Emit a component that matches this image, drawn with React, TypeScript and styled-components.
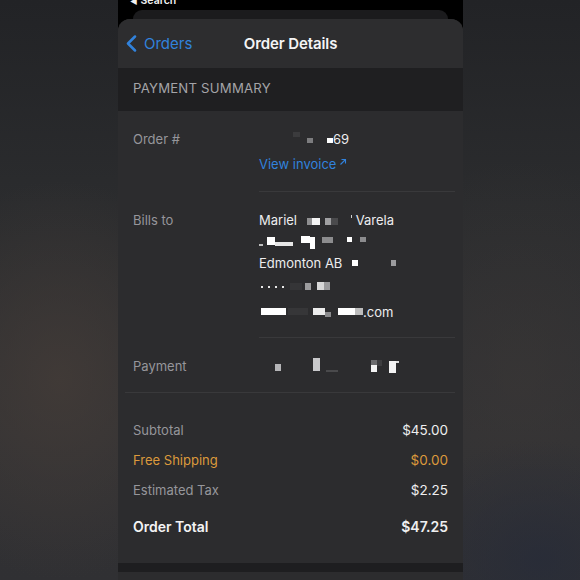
import React from "react";
import styled, { createGlobalStyle } from "styled-components";

const Global = createGlobalStyle`
  html, body { margin: 0; padding: 0; }
  body {
    width: 580px;
    height: 580px;
    overflow: hidden;
    font-family: Inter, "Liberation Sans", Arial, sans-serif;
    -webkit-font-smoothing: antialiased;
  }
`;

const Page = styled.div`
  width: 580px;
  height: 580px;
  overflow: hidden;
  background:
    radial-gradient(ellipse 160px 200px at 60px 380px, rgba(68, 60, 56, 0.8), transparent 100%),
    radial-gradient(ellipse 150px 120px at 540px 560px, rgba(40, 44, 56, 0.9), transparent 100%),
    radial-gradient(ellipse 160px 220px at 520px 380px, rgba(60, 56, 55, 0.55), transparent 100%),
    linear-gradient(180deg, #222326 0%, #2b2c2e 35%, #323234 75%, #303033 100%);
  display: flex;
`;

const Phone = styled.div`
  margin-left: 118px;
  width: 345px;
  height: 580px;
  background: #000;
  display: flex;
  flex-direction: column;
`;

const TopStrip = styled.div`
  height: 19px;
  display: flex;
  flex-direction: column;
  overflow: hidden;
`;

const BackHint = styled.div`
  margin-top: -4px;
  height: 10px;
  padding-left: 12px;
  display: flex;
  align-items: center;
  gap: 3px;
  font-size: 10.5px;
  font-weight: 600;
  color: #f2f2f2;
  line-height: 10px;
`;

const StackCard = styled.div`
  margin: 4px 15px 0;
  flex: 1;
  background: #1b1b1d;
  border-radius: 10px 10px 0 0;
`;

const Sheet = styled.div`
  flex: 1;
  background: #2c2c2e;
  border-radius: 12px 12px 0 0;
  display: flex;
  flex-direction: column;
`;

const NavBar = styled.div`
  height: 49px;
  display: grid;
  grid-template-columns: 1fr auto 1fr;
  align-items: center;
  padding: 0 8px;
  background: #2d2d2f;
  border-radius: 12px 12px 0 0;
`;

const BackButton = styled.div`
  display: flex;
  align-items: center;
  gap: 7px;
  color: #3182dc;
  font-size: 15px;
`;

const NavTitle = styled.div`
  color: #f4f4f5;
  font-size: 15px;
  font-weight: 600;
  letter-spacing: -0.1px;
`;

const SectionHeader = styled.div`
  height: 43px;
  box-sizing: border-box;
  padding: 0 0 3px 15px;
  background: #1f1f21;
  display: flex;
  align-items: center;
  color: #a4a4a8;
  font-size: 13.2px;
  letter-spacing: 0.2px;
`;

const DetailRow = styled.div<{ $pt: number; $pb: number }>`
  display: grid;
  grid-template-columns: 126px 1fr;
  padding: ${(p) => p.$pt}px 8px ${(p) => p.$pb}px 15px;
`;

const RowLabel = styled.div<{ $h: number }>`
  height: ${(p) => p.$h}px;
  display: flex;
  align-items: center;
  color: #96969b;
  font-size: 13px;
`;

const RowValues = styled.div`
  display: flex;
  flex-direction: column;
`;

const ValueLine = styled.div<{ $h: number; $blue?: boolean }>`
  height: ${(p) => p.$h}px;
  display: flex;
  align-items: center;
  color: ${(p) => (p.$blue ? "#3182dc" : "#ededee")};
  font-size: 13px;
  white-space: pre;
`;

const Separator = styled.div<{ $inset: number }>`
  height: 1px;
  margin: 0 8px 0 ${(p) => p.$inset}px;
  background: #39393b;
`;

const Summary = styled.div`
  display: flex;
  flex-direction: column;
  padding: 22px 15px 21px;
`;

const SummaryRow = styled.div<{ $tone: "muted" | "accent" | "total" }>`
  height: ${(p) => (p.$tone === "total" ? 32 : 30)}px;
  margin-top: ${(p) => (p.$tone === "total" ? 5 : 0)}px;
  display: flex;
  align-items: center;
  justify-content: space-between;
  font-size: ${(p) => (p.$tone === "total" ? 14 : 13)}px;
  font-weight: ${(p) => (p.$tone === "total" ? 600 : 400)};
  color: ${(p) =>
    p.$tone === "accent" ? "#dc9a3c" : p.$tone === "total" ? "#f4f4f5" : "#96969b"};
`;

const Amount = styled.span<{ $tone: "muted" | "accent" | "total" }>`
  font-size: ${(p) => (p.$tone === "total" ? 14 : 13.5)}px;
  color: ${(p) => (p.$tone === "accent" ? "#dc9a3c" : "#efeff0")};
`;

const BottomStrip = styled.div`
  height: 9px;
  background: #1e1e20;
`;

const Blk = styled.span<{ $w: number; $h: number; $c: string; $ml: number; $dy: number }>`
  display: inline-block;
  flex: none;
  width: ${(p) => p.$w}px;
  height: ${(p) => p.$h}px;
  margin-left: ${(p) => p.$ml}px;
  background: ${(p) => p.$c};
  transform: translateY(${(p) => p.$dy}px);
`;

type Seg = string | [number, number, number, string, number?];

const Mosaic = ({ segs }: { segs: Seg[] }) => (
  <>
    {segs.map((s, i) =>
      typeof s === "string" ? (
        <span key={i}>{s}</span>
      ) : (
        <Blk key={i} $ml={s[0]} $w={s[1]} $h={s[2]} $c={s[3]} $dy={s[4] ?? 0} />
      )
    )}
  </>
);

const Chevron = () => (
  <svg width="11" height="17" viewBox="0 0 11 17" fill="none">
    <path d="M9 1.5 L2 8.5 L9 15.5" stroke="#3182dc" strokeWidth="2.5" strokeLinecap="round" strokeLinejoin="round" />
  </svg>
);

const ExtArrow = () => (
  <svg width="8" height="8" viewBox="0 0 8 8" fill="none" style={{ marginLeft: 3, marginTop: -5 }}>
    <path d="M1.5 6.5 L6.5 1.5 M2.5 1.5 H6.5 V5.5" stroke="#3182dc" strokeWidth="1.1" />
  </svg>
);

const billLines: { h: number; segs: Seg[] }[] = [
  {
    h: 22,
    segs: [
      "Mariel",
      [10, 5, 7, "#8f8f91", 1],
      [0, 8, 7, "#f4f4f4", 1],
      [5, 6, 7, "#a0a0a2", 1],
      [0, 7, 7, "#4a4a4c", 1],
      [13, 1, 3, "#cfcfcf", -4],
      " Varela",
    ],
  },
  {
    h: 21,
    segs: [
      [0, 4, 2, "#bdbdbd", 3],
      [4, 8, 8, "#ffffff", -1],
      [0, 18, 4, "#e6e6e6", 2],
      [8, 9, 7, "#ffffff", -2],
      [0, 5, 12, "#ffffff", 1],
      [7, 11, 6, "#8c8c8e", -2],
      [14, 5, 5, "#ffffff", -2],
      [8, 6, 5, "#8c8c8e", -2],
    ],
  },
  {
    h: 22,
    segs: ["Edmonton AB", [10, 6, 6, "#ffffff", 0], [33, 5, 6, "#9c9c9e", 0]],
  },
  {
    h: 24,
    segs: [
      [2, 2, 2, "#e8e8e8", 1],
      [5, 2, 2, "#e8e8e8", 1],
      [5, 2, 2, "#e8e8e8", 1],
      [5, 2, 2, "#e8e8e8", 1],
      [6, 12, 7, "#353537", 0],
      [3, 6, 7, "#9c9c9e", 0],
      [6, 13, 8, "linear-gradient(90deg, #d8d8d8 55%, #9a9a9c 55%)", 0],
    ],
  },
  {
    h: 27,
    segs: [
      [2, 25, 7, "#ffffff", 0],
      [2, 20, 7, "#363638", 0],
      [5, 12, 7, "#ececec", 0],
      [0, 6, 5, "#8a8a8c", 3],
      [7, 25, 7, "linear-gradient(90deg, #ffffff 70%, #bdbdbd 70%)", 0],
      ".com",
    ],
  },
];

const summary: { label: string; amount: string; tone: "muted" | "accent" | "total" }[] = [
  { label: "Subtotal", amount: "$45.00", tone: "muted" },
  { label: "Free Shipping", amount: "$0.00", tone: "accent" },
  { label: "Estimated Tax", amount: "$2.25", tone: "muted" },
  { label: "Order Total", amount: "$47.25", tone: "total" },
];

export default function App() {
  return (
    <Page>
      <Global />
      <Phone>
        <TopStrip>
          <BackHint>
            <span style={{ fontSize: 8 }}>◀</span>
            <span>Search</span>
          </BackHint>
          <StackCard />
        </TopStrip>
        <Sheet>
          <NavBar>
            <BackButton>
              <Chevron />
              <span>Orders</span>
            </BackButton>
            <NavTitle>Order Details</NavTitle>
            <div />
          </NavBar>
          <SectionHeader>PAYMENT SUMMARY</SectionHeader>

          <DetailRow $pt={16} $pb={14}>
            <RowLabel $h={24}>Order #</RowLabel>
            <RowValues>
              <ValueLine $h={24}>
                <Mosaic
                  segs={[
                    [34, 7, 5, "#3b3b3d", -5],
                    [7, 6, 5, "#7c7c7e", 1],
                    [14, 6, 5, "#ffffff", 1],
                    "69",
                  ]}
                />
              </ValueLine>
              <ValueLine $h={26} $blue>
                View invoice
                <ExtArrow />
              </ValueLine>
            </RowValues>
          </DetailRow>
          <Separator $inset={141} />

          <DetailRow $pt={17} $pb={12}>
            <RowLabel $h={22}>Bills to</RowLabel>
            <RowValues>
              {billLines.map((l, i) => (
                <ValueLine key={i} $h={l.h}>
                  <Mosaic segs={l.segs} />
                </ValueLine>
              ))}
            </RowValues>
          </DetailRow>
          <Separator $inset={141} />

          <DetailRow $pt={16} $pb={15}>
            <RowLabel $h={23}>Payment</RowLabel>
            <RowValues>
              <ValueLine $h={23}>
                <Mosaic
                  segs={[
                    [16, 6, 7, "#b5b5b7", 2],
                    [32, 7, 13, "#c9c9cb", -1],
                    [6, 12, 2, "#4a4a4c", 5],
                    [33, 6, 12, "linear-gradient(#6c6c6e 45%, #f4f4f4 45%)", 0],
                    [0, 5, 6, "#3e3e40", -3],
                    [7, 7, 12, "#f4f4f4", 1],
                    [0, 3, 2, "#dddddd", -4],
                  ]}
                />
              </ValueLine>
            </RowValues>
          </DetailRow>
          <Separator $inset={7} />

          <Summary>
            {summary.map((s) => (
              <SummaryRow key={s.label} $tone={s.tone}>
                <span>{s.label}</span>
                <Amount $tone={s.tone}>{s.amount}</Amount>
              </SummaryRow>
            ))}
          </Summary>
          <BottomStrip />
        </Sheet>
      </Phone>
    </Page>
  );
}
